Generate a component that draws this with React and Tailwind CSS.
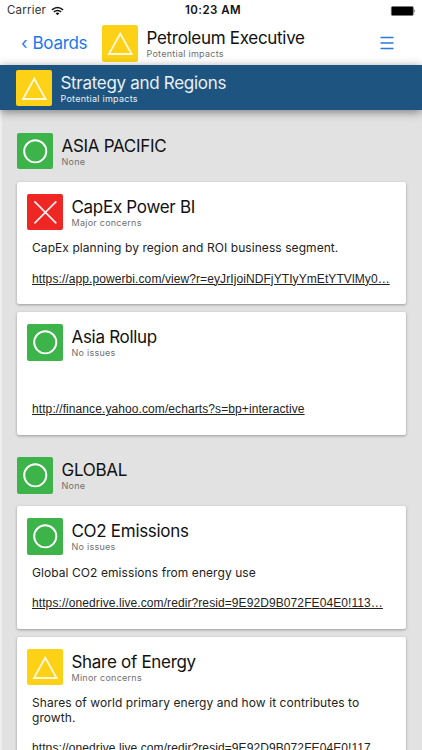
import clsx from 'clsx';

const STATUS_COLORS = {
  ok: 'bg-[#3cb44a]',
  warning: 'bg-[#fcd116]',
  danger: 'bg-[#ee2724]',
};

const SECTIONS = [
  {
    title: 'ASIA PACIFIC',
    note: 'None',
    cards: [
      {
        status: 'danger',
        title: 'CapEx Power BI',
        note: 'Major concerns',
        text: 'CapEx planning by region and ROI business segment.',
        link: 'https://app.powerbi.com/view?r=eyJrIjoiNDFjYTIyYmEtYTVlMy0…',
      },
      {
        status: 'ok',
        title: 'Asia Rollup',
        note: 'No issues',
        text: '',
        link: 'http://finance.yahoo.com/echarts?s=bp+interactive',
      },
    ],
  },
  {
    title: 'GLOBAL',
    note: 'None',
    cards: [
      {
        status: 'ok',
        title: 'CO2 Emissions',
        note: 'No issues',
        text: 'Global CO2 emissions from energy use',
        link: 'https://onedrive.live.com/redir?resid=9E92D9B072FE04E0!113…',
      },
      {
        status: 'warning',
        title: 'Share of Energy',
        note: 'Minor concerns',
        text: 'Shares of world primary energy and how it contributes to growth.',
        link: 'https://onedrive.live.com/redir?resid=9E92D9B072FE04E0!117…',
      },
    ],
  },
];

const StatusTile = ({ status }) => (
  <div className={clsx('size-[36.5px] shrink-0 rounded-[2px]', STATUS_COLORS[status])}>
    <svg viewBox="0 0 36 36" className="size-full" fill="none" stroke="white" aria-hidden="true">
      {status === 'ok' && <circle cx="18" cy="18.1" r="10.9" strokeWidth="1.9" />}
      {status === 'warning' && (
        <path d="M18 8.6 29.2 28.6H6.8Z" strokeWidth="1.8" strokeOpacity="0.85" />
      )}
      {status === 'danger' && (
        <path d="M7.3 7.3 28.9 28.9M28.9 7.3 7.3 28.9" strokeWidth="1.7" strokeOpacity="0.92" />
      )}
    </svg>
  </div>
);

const Heading = ({ status, title, note, noteClass = 'text-[#6f6f6f]' }) => (
  <div className="flex h-[36.5px] gap-[8.5px]">
    <StatusTile status={status} />
    <div className="pt-[3px] whitespace-nowrap">
      <div className="text-[17px] leading-[20.5px] tracking-[-0.3px]">{title}</div>
      <div className={clsx('pt-[0.5px] text-[9px] leading-[10.5px] tracking-[0.26px]', noteClass)}>{note}</div>
    </div>
  </div>
);

const Card = ({ status, title, note, text, link }) => (
  <article className="h-[122.5px] w-[389.5px] shrink-0 rounded-[2px] bg-white pt-3 pl-[10px] shadow-[0_1px_3px_rgba(0,0,0,0.32)]">
    <Heading status={status} title={title} note={note} />
    <p className="mt-[11px] ml-[5.5px] min-h-[14.5px] w-[350px] text-[12px] leading-[14.5px] tracking-[0.07px] text-[#222]">
      {text}
    </p>
    <a
      href={link}
      className="mt-[16px] ml-[5.5px] block w-fit font-['Liberation_Sans',Arial,sans-serif] text-[12px] leading-[14px] tracking-[0.09px] whitespace-nowrap text-[#222] underline"
    >
      {link}
    </a>
  </article>
);

const StatusBar = () => (
  <div className="grid h-[22px] grid-cols-3 items-center pr-[6px] pl-[7px]">
    <div className="flex items-center gap-[5px] text-[11.5px] text-[#333]">
      <span className="tracking-[0.2px]">Carrier</span>
      <svg viewBox="0 0 14 10" className="h-[10px] w-[13px]" fill="none" stroke="#111" strokeWidth="1.6" aria-hidden="true">
        <path d="M1 3.8Q7-1.4 13 3.8M3.1 6Q7 2.7 10.9 6" />
        <path d="M5 7.5Q7 5.9 9 7.5L7 9.6Z" fill="#111" stroke="none" />
      </svg>
    </div>
    <div className="pl-[3px] text-center text-[11.5px] font-semibold tracking-[0.45px]">10:23 AM</div>
    <svg viewBox="0 0 26 10" className="h-[10px] w-[26px] justify-self-end" aria-hidden="true">
      <rect x="1.3" y="0.4" width="22" height="9.2" rx="1.4" stroke="#777" strokeWidth="0.7" />
      <path d="M24.2 3.5Q25.6 5 24.2 6.5Z" />
    </svg>
  </div>
);

export default function App() {
  return (
    <div className="flex h-[750px] w-[422px] flex-col overflow-hidden bg-[#e2e2e2] font-['Inter',sans-serif] text-[#111]">
      <header className="shrink-0 bg-white">
        <StatusBar />
        <nav className="flex h-[43px] items-start pt-[3px] pl-[21px]">
          <button type="button" className="flex h-[37px] w-[80.5px] items-center gap-[5px] text-[17px] text-[#1878f0]">
            <span>‹</span>
            <span className="tracking-[-0.3px]">Boards</span>
          </button>
          <Heading status="warning" title="Petroleum Executive" note="Potential impacts" />
          <button type="button" aria-label="Menu" className="mt-[11px] mr-[28px] ml-auto">
            <svg viewBox="0 0 14 14" className="size-[14px]" stroke="#2878e0" strokeWidth="1.5" aria-hidden="true">
              <path d="M.5 1.4h13M.5 6.9h13M.5 12.4h13" />
            </svg>
          </button>
        </nav>
      </header>

      <div className="relative h-[45px] shrink-0 bg-[#1e5580] pt-[4.5px] pl-[15.5px] text-[#e9f0f6] shadow-[0_2px_9px_rgba(0,0,0,0.45)]">
        <Heading status="warning" title="Strategy and Regions" note="Potential impacts" noteClass="text-[#e9f0f6]" />
      </div>

      <main className="flex min-h-0 flex-1 flex-col border-l-2 border-[#eee] pl-[14.5px]">
        {SECTIONS.map((section) => (
          <section key={section.title} className="shrink-0 pt-[22.5px]">
            <Heading status="ok" title={section.title} note={section.note} />
            <div className="mt-[12.5px] flex flex-col gap-2">
              {section.cards.map((card) => (
                <Card key={card.title} {...card} />
              ))}
            </div>
          </section>
        ))}
      </main>
    </div>
  );
}
